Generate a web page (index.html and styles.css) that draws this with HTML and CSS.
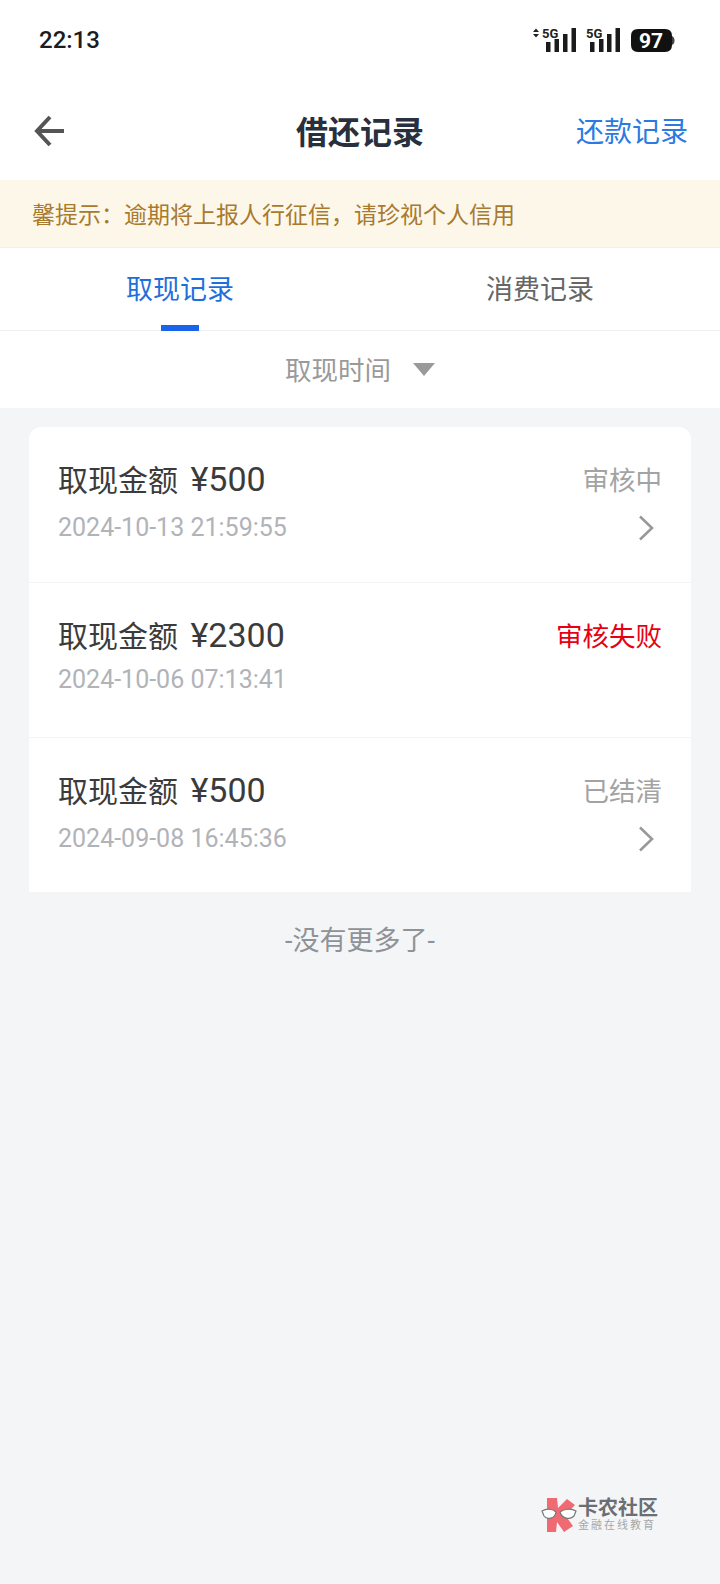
FILE: index.html
```html
<!DOCTYPE html>
<html lang="zh">
	<head>
		<meta charset="utf-8">
		<title>借还记录</title>
		<link rel="stylesheet" href="styles.css">
	</head>
	<body>
		<div class="page">
			<div class="status-bar">
				<span class="clock">22:13</span>
				<svg class="status-icons" width="150" height="30" viewBox="0 0 150 30">
					<path d="M3 5 L6 1.5 L9 5 Z M3 7 L9 7 L6 10.5 Z" fill="#222"/>
					<text x="12" y="11" class="net-label">5G</text>
					<g fill="#1b1b1b">
						<rect x="16" y="15" width="4.5" height="10"/>
						<rect x="24.5" y="12" width="4.5" height="13"/>
						<rect x="33" y="7" width="4.5" height="18"/>
						<rect x="41.5" y="1" width="4.5" height="24"/>
					</g>
					<text x="56" y="11" class="net-label">5G</text>
					<g fill="#1b1b1b">
						<rect x="60" y="15" width="4.5" height="10"/>
						<rect x="69" y="12" width="4.5" height="13"/>
						<rect x="77" y="7" width="4.5" height="18"/>
						<rect x="85.5" y="1" width="4.5" height="24"/>
					</g>
					<path d="M108 2 H135 Q142 2 142 9 V18 Q142 25 135 25 H108 Q101 25 101 18 V9 Q101 2 108 2 Z" fill="#111"/>
					<path d="M142 9 Q144.5 10 144.5 13.5 Q144.5 17 142 18 Z" fill="#444"/>
					<text x="121" y="20.5" class="battery-label">97</text>
				</svg>
			</div>

			<div class="nav-bar">
				<svg class="nav-back" width="32" height="32" viewBox="0 0 32 32">
					<path d="M30 16 H4 M16 2 L3 16 L16 30" fill="none" stroke="#555" stroke-width="4"/>
				</svg>
				<h1 class="nav-title">借还记录</h1>
				<a class="nav-link">还款记录</a>
			</div>

			<div class="notice">馨提示&#xFF1A;逾期将上报人行征信&#xFF0C;请珍视个人信用</div>

			<div class="tabs">
				<div class="tab tab-active">取现记录</div>
				<div class="tab">消费记录</div>
			</div>

			<div class="filter">
				<span>取现时间</span>
				<span class="filter-arrow"></span>
			</div>

			<div class="content">
				<div class="card">
					<div class="row">
						<div class="row-line">
							<span class="amount">取现金额 <span class="money">¥500</span></span>
							<span class="state">审核中</span>
						</div>
						<div class="row-line row-sub">
							<span class="date">2024-10-13 21:59:55</span>
							<svg class="chevron" width="18" height="26" viewBox="0 0 18 26"><path d="M3 1.5 L15 13 L3 24.5" fill="none" stroke="#999" stroke-width="2.6"/></svg>
						</div>
					</div>
					<div class="row">
						<div class="row-line">
							<span class="amount">取现金额 <span class="money">¥2300</span></span>
							<span class="state state-failed">审核失败</span>
						</div>
						<div class="row-line row-sub">
							<span class="date">2024-10-06 07:13:41</span>
						</div>
					</div>
					<div class="row">
						<div class="row-line">
							<span class="amount">取现金额 <span class="money">¥500</span></span>
							<span class="state">已结清</span>
						</div>
						<div class="row-line row-sub">
							<span class="date">2024-09-08 16:45:36</span>
							<svg class="chevron" width="18" height="26" viewBox="0 0 18 26"><path d="M3 1.5 L15 13 L3 24.5" fill="none" stroke="#999" stroke-width="2.6"/></svg>
						</div>
					</div>
				</div>
				<div class="no-more">-没有更多了-</div>
			</div>

			<div class="watermark">
				<svg width="36" height="36" viewBox="0 0 36 36">
					<path d="M6 1 L16 1 L17 11 L26 2 L34 8 L24 18 L32 29 L23 35 L16 25 L15 35 L6 35 Z" fill="#ef6a73"/>
					<path d="M1 14 C6 11 12 12 15 15 C14 22 6 23 3 19 Z M19 15 C23 12 30 11 35 14 L33 19 C29 23 21 22 19 15 Z" fill="#fff" stroke="#777" stroke-width="1.2"/>
				</svg>
				<div class="watermark-text">
					<div class="watermark-name">卡农社区</div>
					<div class="watermark-slogan">金融在线教育</div>
				</div>
			</div>
		</div>
	</body>
</html>
```

FILE: styles.css
```css
* {
	box-sizing: border-box;
}
body {
	margin: 0px;
	background-color: #f4f5f7;
	font-family: Roboto, "Noto Sans CJK SC", sans-serif;
}
.page {
	position: relative;
	width: 720px;
	height: 1584px;
	overflow: hidden;
}

/* status bar */
.status-bar {
	height: 80px;
	background-color: #fff;
	display: flex;
	justify-content: space-between;
	align-items: flex-start;
	padding: 27px 40px 0 39px;
}
.clock {
	font-size: 24px;
	line-height: 26px;
	font-weight: 500;
	color: #1c1c1c;
}
.status-icons {
	display: block;
}
.net-label {
	font-family: Roboto, sans-serif;
	font-size: 13px;
	font-weight: 700;
	fill: #222;
}
.battery-label {
	font-family: Roboto, sans-serif;
	font-size: 21px;
	font-weight: 700;
	fill: #fff;
	text-anchor: middle;
}

/* nav */
.nav-bar {
	height: 100px;
	background-color: #fff;
	display: grid;
	grid-template-columns: 1fr auto 1fr;
	align-items: center;
	padding: 0 32px;
}
.nav-back {
	display: block;
	margin: 1px 0 0 2px;
}
.nav-title {
	margin: 0;
	font-size: 32px;
	font-weight: 700;
	color: #27303c;
}
.nav-link {
	justify-self: end;
	font-size: 28px;
	color: #2a7ae2;
}

.notice {
	height: 68px;
	background-color: #fdf7ea;
	border-bottom: 1px solid #f3f0ea;
	padding-left: 32px;
	font-size: 23px;
	line-height: 71px;
	color: #a87a2e;
}

/* tabs */
.tabs {
	height: 83px;
	background-color: #fff;
	border-bottom: 1px solid #eeeff1;
	display: flex;
}
.tab {
	position: relative;
	flex: 1;
	text-align: center;
	font-size: 27px;
	line-height: 84px;
	color: #666;
}
.tab-active {
	color: #1f6fdb;
}
.tab-active::after {
	content: "";
	position: absolute;
	left: 161px;
	bottom: -1px;
	width: 38px;
	height: 6px;
	background-color: #1a63eb;
}

.filter {
	height: 77px;
	padding-bottom: 3px;
	background-color: #fff;
	display: flex;
	justify-content: center;
	align-items: center;
	gap: 22px;
	font-size: 26.5px;
	color: #9a9a9a;
}
.filter-arrow {
	width: 0;
	height: 0;
	border-left: 11px solid transparent;
	border-right: 11px solid transparent;
	border-top: 13px solid #9a9a9a;
	margin-top: 2px;
}

/* list */
.content {
	padding: 19px 29px 0 29px;
}
.card {
	background-color: #fff;
	border-radius: 12px 12px 0 0;
	overflow: hidden;
}
.row {
	height: 155px;
	padding: 30px 29px 0 29px;
	border-top: 1px solid #f3f4f6;
}
.row:first-child {
	border-top: 0;
}
.row-line {
	display: flex;
	justify-content: space-between;
	align-items: center;
	height: 42px;
}
.row-sub {
	height: auto;
	margin-top: 11px;
}
.amount {
	font-size: 30px;
	color: #3b3b3b;
}
.money {
	font-size: 34px;
	margin-left: 5px;
}
.state {
	font-size: 26.5px;
	color: #a3a3a3;
}
.state-failed {
	color: #e60012;
}
.date {
	font-size: 25px;
	line-height: 28px;
	color: #b1b3b8;
}
.chevron {
	display: block;
	margin: 5px 7px 5px 0;
}
.no-more {
	margin-top: 31px;
	text-align: center;
	font-size: 27px;
	line-height: 36px;
	color: #8f9296;
}

/* logo over the bottom corner */
.watermark {
	position: absolute;
	left: 541px;
	top: 1497px;
	display: flex;
	align-items: center;
	gap: 1px;
}
.watermark-name {
	font-size: 20px;
	line-height: 22px;
	font-weight: 700;
	color: #6b6e73;
}
.watermark-slogan {
	font-size: 11px;
	line-height: 14px;
	color: #a5a7aa;
	letter-spacing: 2px;
}
```
